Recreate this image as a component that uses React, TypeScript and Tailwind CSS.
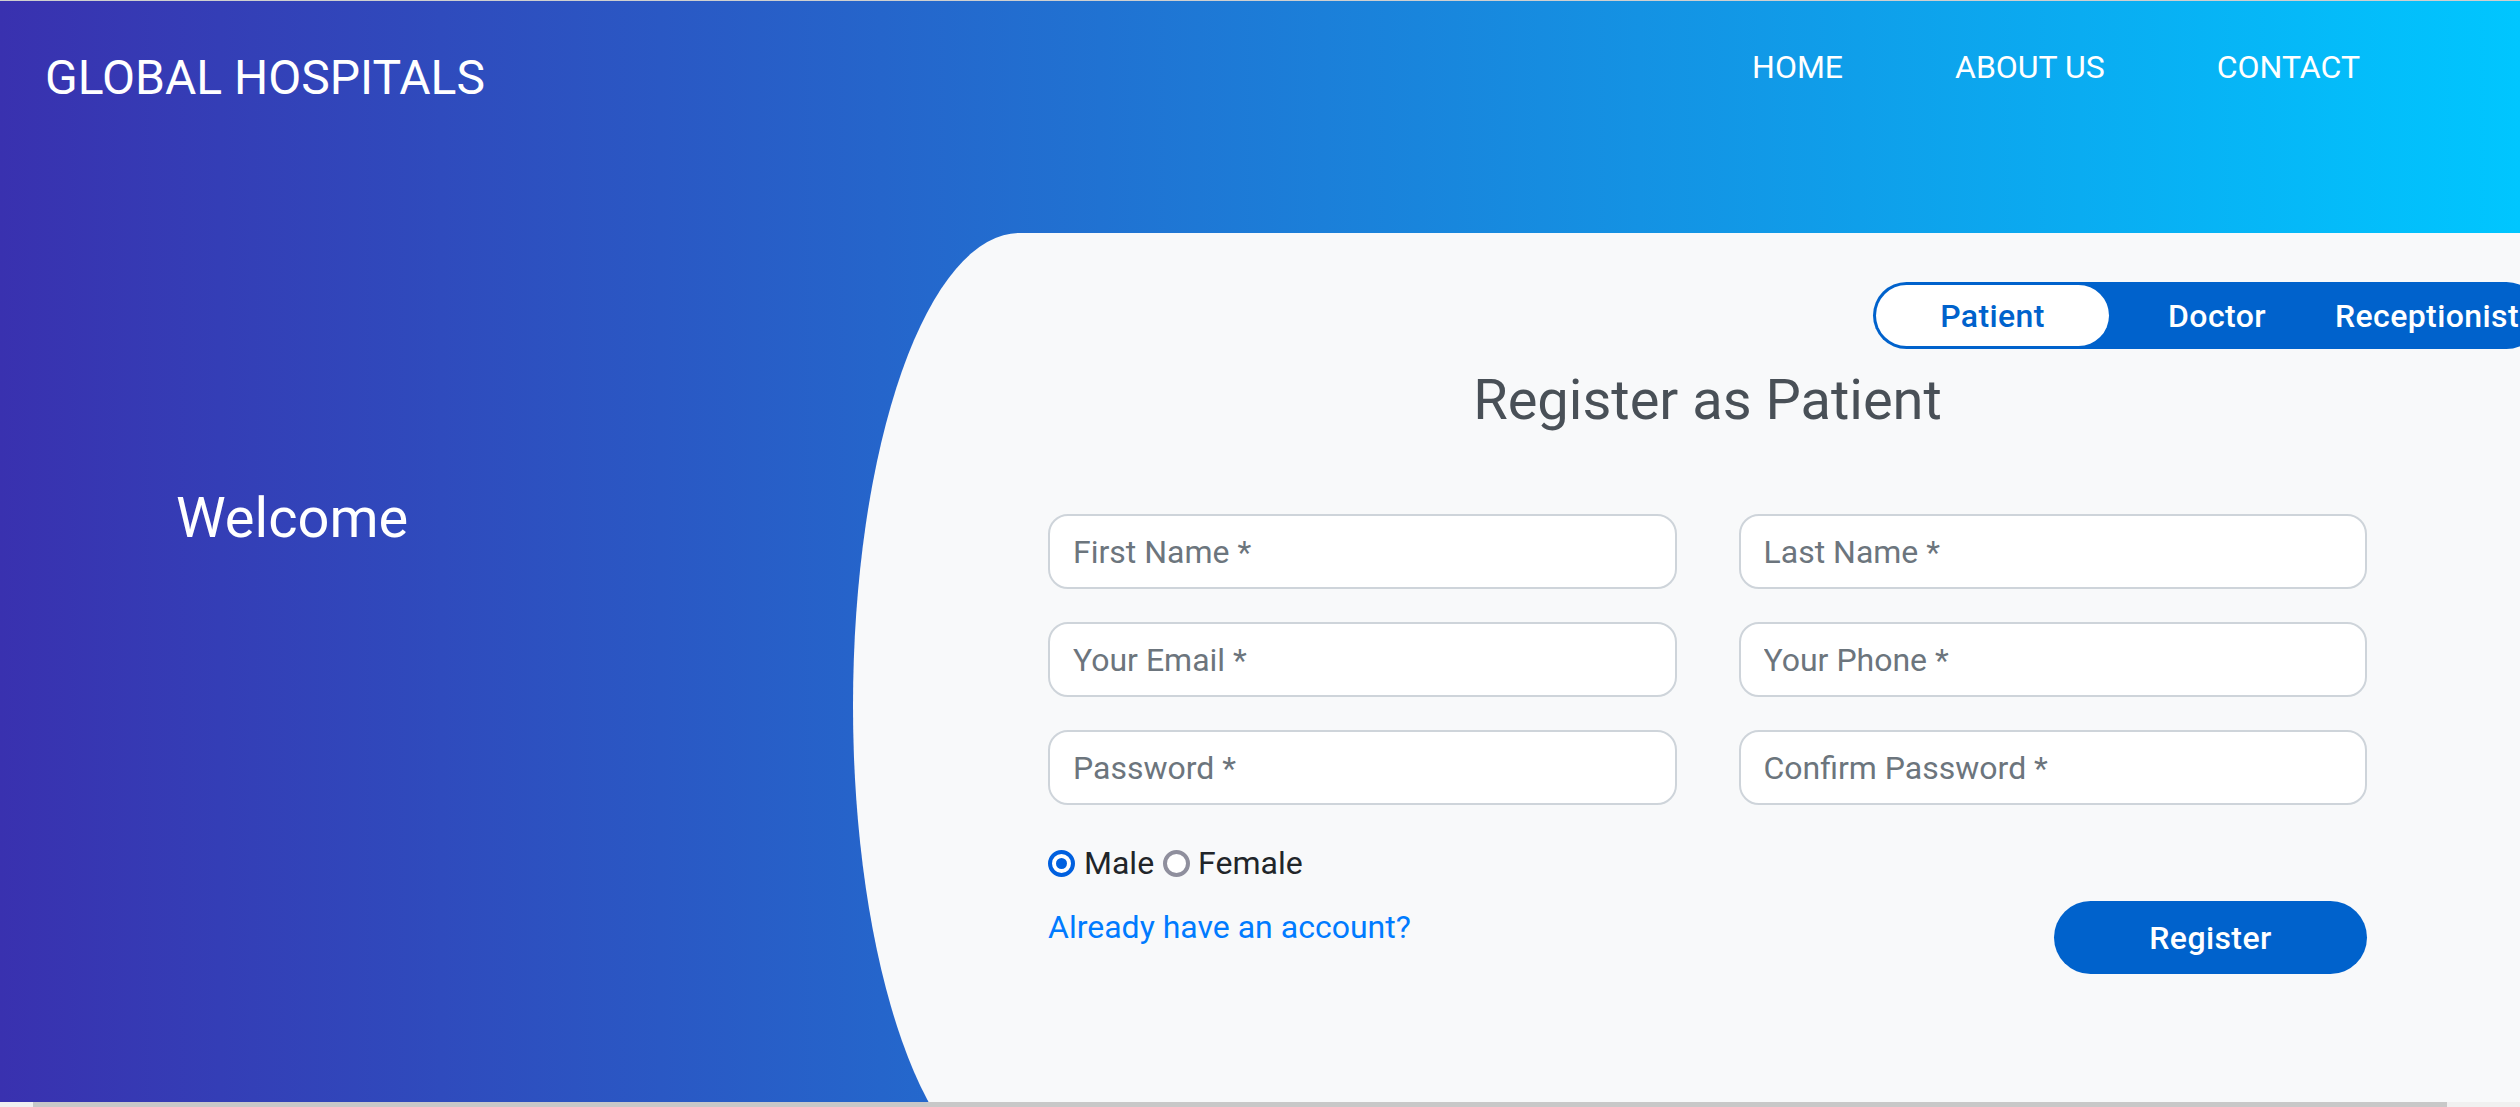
import { useState } from 'react';

/* ── Form pieces ─────────────────────────────────────────────────────── */
function Field({ placeholder, type = 'text' }: { placeholder: string; type?: string }) {
  return (
    <input
      type={type}
      placeholder={placeholder}
      className="h-[75px] w-full rounded-[20px] border-2 border-[#ced4da] bg-white px-[23px] text-[32px] text-[#495057] outline-none placeholder:text-[#6c757d]"
    />
  );
}

function Radio({ checked }: { checked: boolean }) {
  if (checked) {
    return (
      <span className="flex h-[27px] w-[27px] shrink-0 items-center justify-center rounded-full border-[4px] border-[#0060df] bg-white">
        <span className="h-[11px] w-[11px] rounded-full bg-[#0060df]" />
      </span>
    );
  }
  return <span className="h-[27px] w-[27px] shrink-0 rounded-full border-[4px] border-[#8f8f9d] bg-white" />;
}

const leftFields = [
  { placeholder: 'First Name *' },
  { placeholder: 'Your Email *', type: 'email' },
  { placeholder: 'Password *', type: 'password' },
];
const rightFields = [
  { placeholder: 'Last Name *' },
  { placeholder: 'Your Phone *', type: 'tel' },
  { placeholder: 'Confirm Password *', type: 'password' },
];

export default function App() {
  const [gender, setGender] = useState<'male' | 'female'>('male');
  const [role, setRole] = useState('Patient');

  return (
    <div className="flex h-[1107px] w-[2520px] flex-col overflow-hidden border-t border-[#cfcfcf] bg-linear-to-r/srgb from-[#3931af] to-[#00c6ff] font-['Roboto',sans-serif]">
      <div className="flex min-h-0 flex-1 flex-col overflow-hidden">
        {/* Header */}
        <header className="flex h-[232px] shrink-0 items-start pt-[50px] text-white">
          <div className="mt-[3px] pl-[45px] text-[48px] leading-none">GLOBAL HOSPITALS</div>
          <nav className="ml-auto flex gap-[112px] pr-[160px] text-[32px] leading-none">
            <a href="#">HOME</a>
            <a href="#">ABOUT US</a>
            <a href="#">CONTACT</a>
          </nav>
        </header>

        {/* Body */}
        <div className="flex min-h-0 flex-1 items-start">
          <div className="w-[853px] shrink-0 pl-[176px] pt-[257px] text-[56px] leading-none text-white">Welcome</div>

          <div className="h-[946px] w-[1667px] shrink-0 rounded-tl-[10%_50%] rounded-bl-[10%_50%] bg-[#f8f9fa] pl-[195px] pr-[153px] pt-[49px]">
            {/* Role tabs */}
            <div className="-mr-[173px] flex justify-end">
              <div className="flex h-[67px] w-[667px] shrink-0 rounded-full bg-[#0062cc] p-[3px] text-[32px] font-medium leading-none tracking-[0.4px]">
                {['Patient', 'Doctor', 'Receptionist'].map(r => (
                  <button
                    key={r}
                    onClick={() => setRole(r)}
                    className={
                      r === role
                        ? 'flex w-[233px] shrink-0 items-center justify-center rounded-full bg-white text-[#0062cc]'
                        : r === 'Doctor'
                          ? 'flex w-[226px] shrink-0 items-center justify-center pr-[10px] text-white'
                          : 'flex flex-1 items-center whitespace-nowrap text-white'
                    }
                  >
                    {r}
                  </button>
                ))}
              </div>
            </div>

            <h3 className="mt-[23px] text-center text-[56px] font-normal leading-none text-[#495057]">Register as {role}</h3>

            <div className="mt-[86px] grid grid-cols-2 gap-x-[62px]">
              <div className="flex flex-col">
                <div className="flex flex-col gap-[33px]">
                  {leftFields.map(f => (
                    <Field key={f.placeholder} {...f} />
                  ))}
                </div>
                <div className="mt-[42px] flex h-[32px] items-center text-[32px] leading-none text-[#212529]">
                  <label className="flex cursor-pointer items-center gap-[9px]" onClick={() => setGender('male')}>
                    <Radio checked={gender === 'male'} />
                    <span>Male</span>
                  </label>
                  <label className="ml-[9px] flex cursor-pointer items-center gap-[8px]" onClick={() => setGender('female')}>
                    <Radio checked={gender === 'female'} />
                    <span>Female</span>
                  </label>
                </div>
                <a href="#" className="mt-[32px] self-start text-[32px] leading-none text-[#007bff]">
                  Already have an account?
                </a>
              </div>

              <div className="flex flex-col">
                <div className="flex flex-col gap-[33px]">
                  {rightFields.map(f => (
                    <Field key={f.placeholder} {...f} />
                  ))}
                </div>
                <button className="mt-[96px] h-[73px] w-[313px] self-end rounded-full bg-[#0062cc] text-[32px] font-medium tracking-[0.4px] text-white">
                  Register
                </button>
              </div>
            </div>
          </div>
        </div>
      </div>

      {/* Horizontal scrollbar */}
      <div className="flex h-[5px] shrink-0 bg-[#f0f0f0]">
        <div className="ml-[33px] w-[2414px] bg-[#c8c8c8]" />
      </div>
    </div>
  );
}
